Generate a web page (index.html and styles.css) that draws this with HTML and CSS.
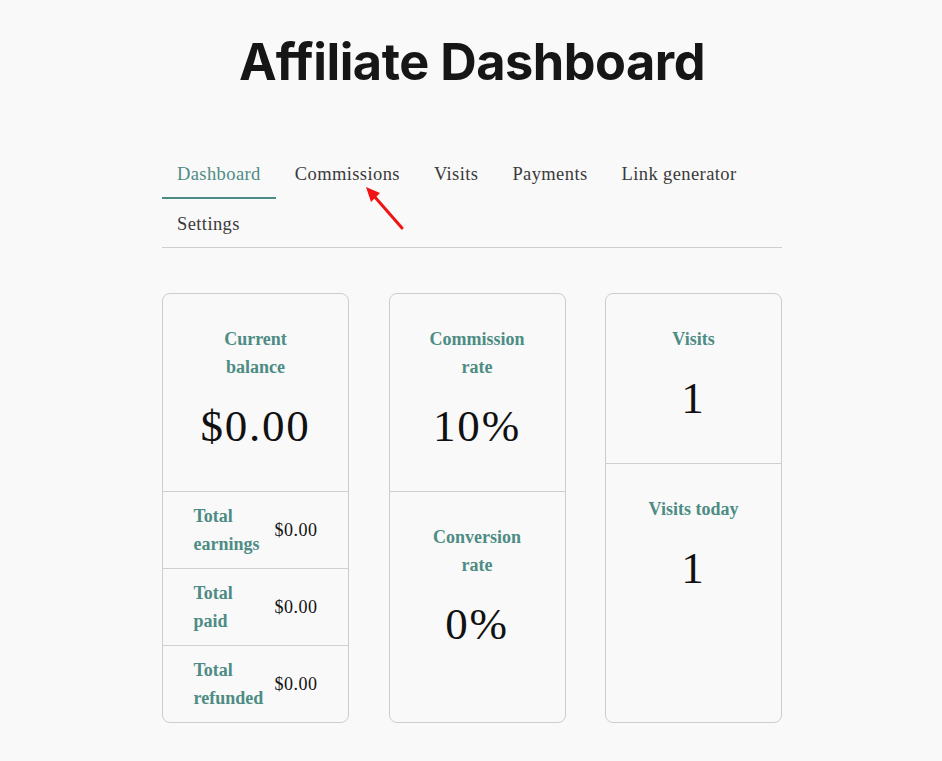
FILE: index.html
```html
<!DOCTYPE html>
<html lang="en">
<head>
<meta charset="utf-8">
<title>Affiliate Dashboard</title>
<link rel="stylesheet" href="styles.css">
</head>
<body>
<div class="page">
  <h1 class="title">Affiliate Dashboard</h1>
  <nav class="tabs">
    <a class="tab active">Dashboard</a>
    <a class="tab">Commissions</a>
    <a class="tab">Visits</a>
    <a class="tab">Payments</a>
    <a class="tab">Link generator</a>
    <a class="tab">Settings</a>
  </nav>
  <div class="cards">
    <div class="card card-wide">
      <div class="stat">
        <div class="label">Current balance</div>
        <div class="value">$0.00</div>
      </div>
      <div class="row">
        <div class="row-label">Total earnings</div>
        <div class="row-value">$0.00</div>
      </div>
      <div class="row">
        <div class="row-label">Total paid</div>
        <div class="row-value">$0.00</div>
      </div>
      <div class="row">
        <div class="row-label">Total refunded</div>
        <div class="row-value">$0.00</div>
      </div>
    </div>
    <div class="card">
      <div class="stat">
        <div class="label">Commission rate</div>
        <div class="value">10%</div>
      </div>
      <div class="stat grow">
        <div class="label">Conversion rate</div>
        <div class="value">0%</div>
      </div>
    </div>
    <div class="card">
      <div class="stat">
        <div class="label">Visits</div>
        <div class="value">1</div>
      </div>
      <div class="stat grow">
        <div class="label">Visits today</div>
        <div class="value">1</div>
      </div>
    </div>
  </div>
  <svg class="arrow" width="942" height="761" viewBox="0 0 942 761">
    <line x1="403" y1="228" x2="375" y2="196" stroke="#f01414" stroke-width="3" stroke-linecap="round"/>
    <polygon points="367,187 381,193 372,202" fill="#f01414"/>
  </svg>
</div>
</body>
</html>
```
FILE: styles.css
```css
html, body {
  margin: 0;
  padding: 0;
  background: #f9f9f9;
}
.page {
  position: relative;
  width: 620px;
  margin: 0 auto;
  padding: 32px 0 40px 2px;
  font-family: "Liberation Serif", serif;
  color: #111;
}
.title {
  margin: 0 0 58px;
  text-align: center;
  font-family: Inter, "Liberation Sans", sans-serif;
  font-weight: 700;
  font-size: 50.5px;
  line-height: 60px;
  color: #161616;
  letter-spacing: -0.5px;
}
.tabs {
  display: flex;
  flex-wrap: wrap;
  column-gap: 4px;
  border-bottom: 1px solid #cfcfcf;
}
.tab {
  padding: 12px 15px 11px;
  line-height: 24px;
  font-size: 18.5px;
  letter-spacing: 0.4px;
  color: #3a3a3a;
  border-bottom: 2px solid transparent;
}
.tab + .tab + .tab + .tab + .tab + .tab {
  padding-top: 13px;
  padding-bottom: 9px;
}
.tab.active {
  color: #4d8c84;
  border-bottom-color: #4d8c84;
}
.cards {
  margin-top: 45px;
  display: grid;
  grid-template-columns: 187px 177px 177px;
  justify-content: space-between;
}
.card {
  display: flex;
  flex-direction: column;
  border: 1px solid #cdcdcd;
  border-radius: 8px;
  box-sizing: border-box;
}
.stat {
  padding: 31px 10px 38px;
  text-align: center;
}
.stat + .stat {
  border-top: 1px solid #d0d0d0;
}
.grow {
  flex: 1;
}
.label {
  font-weight: 700;
  font-size: 18px;
  line-height: 28px;
  color: #4d8c84;
  width: min-content;
  margin: 0 auto;
  min-width: 96px;
}
.value {
  margin-top: 18px;
  font-size: 45px;
  line-height: 54px;
  letter-spacing: 1.8px;
  color: #111;
}
.row {
  display: flex;
  justify-content: center;
  align-items: center;
  column-gap: 10px;
  padding: 10px 0;
  border-top: 1px solid #d0d0d0;
  height: 77px;
  box-sizing: border-box;
}
.row-label {
  width: 71px;
  font-weight: 700;
  font-size: 18px;
  line-height: 28px;
  color: #4d8c84;
}
.row-value {
  width: 43px;
  font-size: 18px;
  letter-spacing: 0.5px;
  white-space: nowrap;
}
.arrow {
  position: absolute;
  top: 0;
  left: calc(50% - 472px);
  pointer-events: none;
}
```
